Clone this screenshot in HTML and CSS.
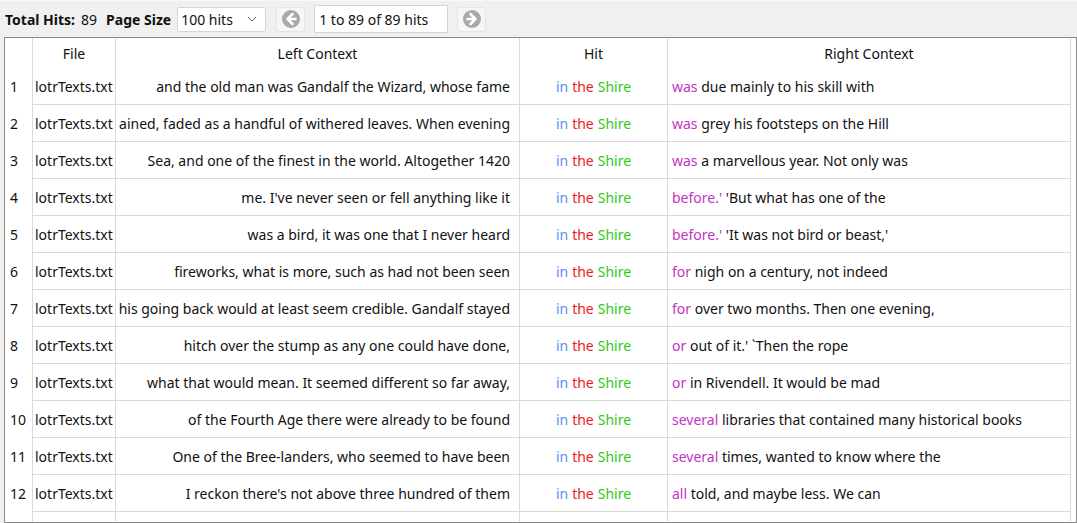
FILE: index.html
```html
<!DOCTYPE html>
<html>
<head>
<meta charset="utf-8">
<link rel="stylesheet" href="styles.css">
</head>
<body>
<div class="toolbar">
  <span class="lbl">Total Hits:</span>
  <span class="val">89</span>
  <span class="lbl ps">Page Size</span>
  <div class="select"><span>100 hits</span>
    <svg class="chev" width="10" height="6" viewBox="0 0 10 6"><path d="M1 1 L5 5 L9 1" fill="none" stroke="#666" stroke-width="1"/></svg>
  </div>
  <div class="btn prev"><svg width="20" height="20" viewBox="0 0 20 20"><circle cx="10" cy="10" r="9" fill="#a9a9a9"/><path d="M11.5 5 L6.5 10 L11.5 15 M6.5 10 H14.5" fill="none" stroke="#fff" stroke-width="2.6" stroke-linecap="round" stroke-linejoin="round"/></svg></div>
  <div class="field">1 to 89 of 89 hits</div>
  <div class="btn next"><svg width="20" height="20" viewBox="0 0 20 20"><circle cx="10" cy="10" r="9" fill="#a9a9a9"/><path d="M8.5 5 L13.5 10 L8.5 15 M13.5 10 H5.5" fill="none" stroke="#fff" stroke-width="2.6" stroke-linecap="round" stroke-linejoin="round"/></svg></div>
</div>
<div class="panel">
  <div class="grid" id="grid">
    <div class="h c0"></div><div class="h">File</div><div class="h">Left Context</div><div class="h">Hit</div><div class="h">Right Context</div>
  </div>
</div>
<script src="app.js"></script>
</body>
</html>
```
FILE: app.js
```js
const rows = [
 ["and the old man was Gandalf the Wizard, whose fame","was","due mainly to his skill with"],
 ["ained, faded as a handful of withered leaves. When evening","was","grey his footsteps on the Hill"],
 ["Sea, and one of the finest in the world. Altogether 1420","was","a marvellous year. Not only was"],
 ["me. I've never seen or fell anything like it","before.'","'But what has one of the"],
 ["was a bird, it was one that I never heard","before.'","'It was not bird or beast,'"],
 ["fireworks, what is more, such as had not been seen","for","nigh on a century, not indeed"],
 ["his going back would at least seem credible. Gandalf stayed","for","over two months. Then one evening,"],
 ["hitch over the stump as any one could have done,","or","out of it.' `Then the rope"],
 ["what that would mean. It seemed different so far away,","or","in Rivendell. It would be mad"],
 ["of the Fourth Age there were already to be found","several","libraries that contained many historical books"],
 ["One of the Bree-landers, who seemed to have been","several","times, wanted to know where the"],
 ["I reckon there's not above three hundred of them","all","told, and maybe less. We can"]
];
const g = document.getElementById('grid');
let html = '';
rows.forEach((r, i) => {
  html += `<div class="c c0">${i+1}</div>` +
    `<div class="c file">lotrTexts.txt</div>` +
    `<div class="c left"><span>${r[0]}</span></div>` +
    `<div class="c hit"><span class="in">in</span> <span class="the">the</span> <span class="shire">Shire</span></div>` +
    `<div class="c right"><span><span class="kw">${r[1]}</span> ${r[2]}</span></div>`;
});
html += '<div class="c c0"></div><div class="c"></div><div class="c"></div><div class="c"></div><div class="c"></div>';
g.insertAdjacentHTML('beforeend', html);
```
FILE: styles.css
```css
* { box-sizing: border-box; }
html, body { margin: 0; padding: 0; }
body {
  width: 1077px;
  height: 523px;
  overflow: hidden;
  background: #f0f0f0;
  font-family: "Noto Sans", "Open Sans", sans-serif;
  font-size: 14px;
  color: #111;
}
.toolbar {
  height: 37px;
  display: flex;
  align-items: center;
  padding-left: 5px;
  border-top: 1px solid #f8f8f8;
}
.lbl { font-weight: bold; }
.val { margin-left: 6px; }
.ps { margin-left: 9px; }
.select {
  margin-left: 6px;
  width: 89px;
  height: 25px;
  background: #fff;
  border: 1px solid #d6d6d6;
  border-radius: 2px;
  display: flex;
  align-items: center;
  justify-content: space-between;
  padding: 0 8px 0 3px;
}
.btn {
  width: 29px;
  height: 25px;
  background: #f6f6f6;
  border: 1px solid #e4e4e4;
  border-radius: 3px;
  display: flex;
  align-items: center;
  justify-content: center;
}
.prev { margin-left: 10px; }
.field {
  margin-left: 9px;
  width: 134px;
  height: 28px;
  background: #fff;
  border: 1px solid #d6d6d6;
  display: flex;
  align-items: center;
  padding-left: 4px;
}
.next { margin-left: 9px; }
.panel {
  margin-left: 4px;
  width: 1073px;
  height: 486px;
  background: #fff;
  border: 1px solid #8a8a8a;
  overflow: hidden;
}
.grid {
  display: grid;
  grid-template-columns: 28px 83px 404px 148px 403px;
  grid-auto-rows: 37px;
  grid-template-rows: 30px;
}
.h, .c {
  border-right: 1px solid #dadada;
  display: flex;
  align-items: center;
  white-space: nowrap;
  overflow: hidden;
}
.h { justify-content: center; }
.c { border-bottom: 1px solid #dadada; }
.c.c0 { border-bottom: none; padding-left: 5px; }
.file { padding-left: 2px; }
.left { justify-content: flex-end; padding-right: 9px; }
.hit { justify-content: center; }
.hit span { margin: 0 2px; }
.right { padding-left: 4px; }
.in { color: #5b8ef6; }
.the { color: #f21818; }
.shire { color: #2fc91a; }
.kw { color: #c433c4; }
```
